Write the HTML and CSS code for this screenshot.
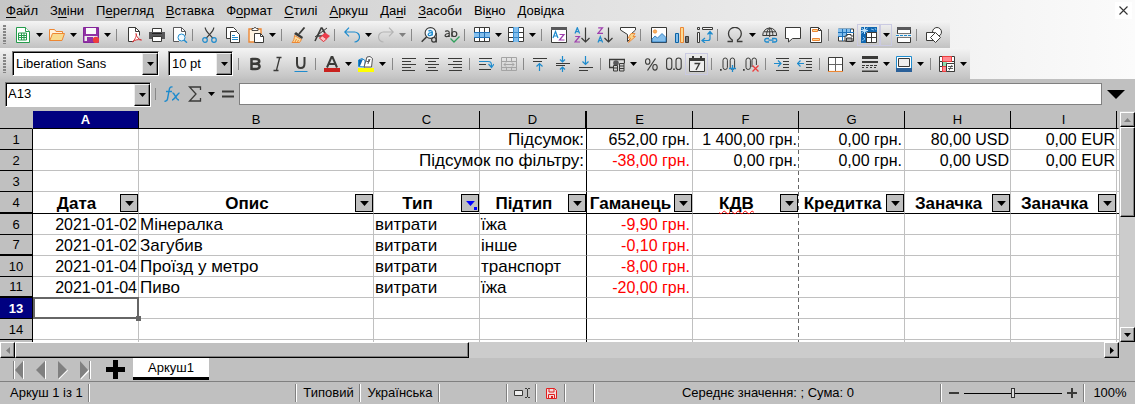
FILE: index.html
```html
<!DOCTYPE html>
<html lang="uk">
<head>
<meta charset="utf-8">
<title>Аркуш1</title>
<link rel="stylesheet" href="styles.css">
</head>
<body>
<svg class="defs" aria-hidden="true"><symbol id="dd" viewBox="0 0 7 4"><path d="M0 0h7L3.5 4z"/></symbol></svg>

<div class="top">
<nav class="menu">
<button><u>Ф</u>айл</button><button>З<u>м</u>іни</button><button>П<u>е</u>регляд</button><button><u>В</u>ставка</button><button>Ф<u>о</u>рмат</button><button><u>С</u>тилі</button><button><u>А</u>ркуш</button><button>Да<u>н</u>і</button><button><u>З</u>асоби</button><button>Ві<u>к</u>но</button><button><u>Д</u>овідка</button>
<button class="close" aria-label="Закрити"><svg viewBox="0 0 9 9" width="9" height="9"><path d="M.5.5l8 8M8.500.5l-8 8" stroke="#333" stroke-width="1.1"/></svg></button>
</nav>

<div class="bar bar-main">
<i class="grip"></i>
<button class="tb" aria-label="Створити"><svg viewBox="0 0 16 16"><path d="M1.500.5h9l4 4v11h-13z" fill="#fff" stroke="#259c4c"/><path d="M10.500.5v4h4" fill="#fff" stroke="#259c4c"/><path d="M3.500 6h8v7h-8zM3.500 8.500h8M3.500 10.500h8M6.500 6v7M9 6v7" fill="none" stroke="#259c4c"/></svg></button><button class="drop" aria-label="Меню"><svg><use href="#dd"/></svg></button>
<button class="tb" aria-label="Відкрити"><svg viewBox="0 0 16 16"><path d="M.5 13.500v-11h5l1.500 2h6.500v3" fill="#fff3df" stroke="#ed8733"/><path d="M3.500 6.500h12l-2.500 7H.8z" fill="#f8db8f" stroke="#ed8733"/></svg></button><button class="drop" aria-label="Меню"><svg><use href="#dd"/></svg></button>
<button class="tb" aria-label="Зберегти"><svg viewBox="0 0 16 16"><path d="M.5.5h15v15H.5z" fill="#9132a5" stroke="#84269a"/><path d="M3 1h10v6H3z" fill="#fafafa"/><path d="M1.500 9h13v5h-13z" fill="#ededed"/><path d="M4 10h6v5H4z" fill="#9132a5"/><circle cx="13" cy="13" r="3.200" fill="#ee3d3d"/></svg></button><button class="drop" aria-label="Меню"><svg><use href="#dd"/></svg></button>
<i class="sep"></i>
<button class="tb" aria-label="PDF"><svg viewBox="0 0 16 16"><path d="M8 14.500H2.500V.5h7l4 4v4" fill="#fff" stroke="#3a3a38"/><path d="M9.500.5v4h4" fill="none" stroke="#3a3a38"/><path d="M10 6.500c1 2-1 6-3.500 8.500 2-2 5-3 9-2-3-.5-5-3-5.500-6.500z" fill="#fff" stroke="#d7373a"/></svg></button>
<button class="tb" aria-label="Друк"><svg viewBox="0 0 16 16"><path d="M3.500 5V1.500h9V5" fill="#fff" stroke="#3a3a38"/><path d="M0 5h16v7H0z" fill="#58585a"/><path d="M3 6h10v1H3z" fill="#222"/><path d="M3.500 9.500h9v5h-9z" fill="#fff" stroke="#3a3a38"/></svg></button>
<button class="tb" aria-label="Перегляд друку"><svg viewBox="0 0 16 16"><path d="M7 14.500H1.500V.5h8l4 4v4" fill="#fff" stroke="#58585a"/><path d="M9.500.5v4h4" fill="none" stroke="#58585a"/><circle cx="9.500" cy="10.500" r="3.500" fill="#eef8ff" stroke="#1e8bcd"/><path d="M12 13l3 2.700" stroke="#1e8bcd" stroke-width="1.400"/></svg></button>
<i class="sep"></i>
<button class="tb" aria-label="Вирізати"><svg viewBox="0 0 16 16"><path d="M3.200.5c0 4 4.800 7 7.800 11M11.800.5c0 4-4.800 7-7.800 11" fill="none" stroke="#3a3a38" stroke-width="1.200"/><circle cx="3" cy="13" r="2.300" fill="none" stroke="#1e8bcd" stroke-width="1.200"/><circle cx="12" cy="13" r="2.300" fill="none" stroke="#1e8bcd" stroke-width="1.200"/></svg></button>
<button class="tb" aria-label="Копіювати"><svg viewBox="0 0 16 16"><path d="M1.500.5h7l3 3v8h-10z" fill="#fff" stroke="#3a3a38"/><path d="M5.500 4.500h6l3 3v8h-9z" fill="#fff" stroke="#3a3a38"/><path d="M7 8.500h3M7 10.500h6M7 12.500h6" stroke="#1e8bcd"/></svg></button>
<button class="tb" aria-label="Вставити"><svg viewBox="0 0 16 16"><path d="M1 2h12v13H1z" fill="#fff4e2" stroke="#ed8733" stroke-width="1.400"/><path d="M4 3.500V1.500h1.500L7 .3l1.500 1.200H10v2z" fill="#fff" stroke="#3a3a38" stroke-width=".9"/><path d="M6.500 6.500h6l3 3v6h-9z" fill="#fff" stroke="#3a3a38"/><path d="M12.500 6.500v3h3" fill="none" stroke="#3a3a38"/></svg></button><button class="drop" aria-label="Меню"><svg><use href="#dd"/></svg></button>
<i class="sep"></i>
<button class="tb" aria-label="Клонувати форматування"><svg viewBox="0 0 16 16"><path d="M13.500.5L8 7" stroke="#3a3a38" stroke-width="1.800"/><path d="M5 5l7 5-1 2-8-5z" fill="#3a3a38"/><path d="M3.500 8.500l7 4-2 3H1c1.500-1.500 2.500-4 2.500-7z" fill="#fbdc9d" stroke="#ed8733"/><path d="M4 15l1.500-3M6.500 15l1-2" stroke="#ed8733"/></svg></button>
<button class="tb" aria-label="Очистити форматування"><svg viewBox="0 0 16 16"><path d="M1 14L7.200 1h.8l4 7M3.500 9h5.500" fill="none" stroke="#3a3a38" stroke-width="1.600"/><path d="M1 10l12-9" stroke="#3a3a38"/><path d="M11 5.500l5 3.500-6.500 6L5 11z" fill="#ee3d4d"/><path d="M8.500 9l4 3-3 2.500L5.500 11z" fill="#ffc1c6" stroke="#d7373a" stroke-width=".8"/></svg></button>
<i class="sep"></i>
<button class="tb" aria-label="Скасувати"><svg viewBox="0 0 16 16"><path d="M1 5h9.500a4.800 4.800 0 0 1 0 10M5 .7L.8 5 5 9.300" fill="none" stroke="#1e8bcd" stroke-width="1.200"/></svg></button><button class="drop" aria-label="Меню"><svg><use href="#dd"/></svg></button>
<button class="tb" aria-label="Повторити"><svg viewBox="0 0 16 16"><path d="M15 5H5.500a4.800 4.800 0 0 0 0 10M11 .7L15.200 5 11 9.300" fill="none" stroke="#b4b4b4" stroke-width="1.200"/></svg></button><button class="drop off" aria-label="Меню"><svg><use href="#dd"/></svg></button>
<i class="sep"></i>
<button class="tb" aria-label="Знайти"><svg viewBox="0 0 16 16"><circle cx="9.500" cy="6" r="5.400" fill="#f6fbff" stroke="#3a3a38" stroke-width="1.100"/><path d="M5.500 10L.7 14.700" stroke="#3a3a38" stroke-width="1.600"/><path d="M7.500 4.200c1-1 3.800-1 3.800.8v3.500M11.200 5.700c-5-.3-4.800 3.200-2.200 2.800 1 0 2-.8 2.200-1.500" fill="none" stroke="#1e8bcd" stroke-width="1.300"/><path d="M15.300 6v9.500" stroke="#3a3a38" stroke-width="1.200"/><circle cx="12.900" cy="12.800" r="2.300" fill="none" stroke="#3a3a38" stroke-width="1.200"/></svg></button>
<button class="tb" aria-label="Правопис"><svg viewBox="0 0 16 16"><path d="M1.200 4.500c1-.9 4-.9 4 1v4.500M5.200 6.500C.5 6.200.2 9.700 2.500 9.700c1.500 0 2.500-1 2.700-1.800" fill="none" stroke="#3a3a38" stroke-width="1.200"/><path d="M8 1v9" stroke="#3a3a38" stroke-width="1.200"/><circle cx="10.300" cy="7" r="2.500" fill="none" stroke="#3a3a38" stroke-width="1.200"/><path d="M6.500 11.500l3.500 3.500 5.500-5.500" fill="none" stroke="#30a05c" stroke-width="1.300"/></svg></button>
<i class="sep"></i>
<button class="tb" aria-label="Рядок"><svg viewBox="0 0 16 16"><path d="M.5.5h15v14H.5z" fill="#fff" stroke="#3a3a38"/><path d="M5.500 0v15M10.500 0v15" stroke="#3a3a38"/><path d="M0 5h16v5H0z" fill="#83beec"/><path d="M0 5.500h16M0 10.500h16M5.500 5v5M10.500 5v5" stroke="#1e70b8"/></svg></button><button class="drop" aria-label="Меню"><svg><use href="#dd"/></svg></button>
<button class="tb" aria-label="Стовпець"><svg viewBox="0 0 16 16"><path d="M.5.5h15v14H.5z" fill="#fff" stroke="#3a3a38"/><path d="M0 5.500h16M0 10.500h16" stroke="#3a3a38"/><path d="M5 0h6v15H5z" fill="#83beec"/><path d="M5.500 0v15M10.500 0v15M5 5.500h6M5 10.500h6" stroke="#3a8fd0"/></svg></button><button class="drop" aria-label="Меню"><svg><use href="#dd"/></svg></button>
<i class="sep"></i>
<button class="tb" aria-label="Сортувати"><svg viewBox="0 0 16 16"><path d="M.5.5h15v15H.5z" fill="#fff" stroke="#3a3a38"/><path d="M0 0h16v3H0z" fill="#58585a"/><path d="M2 11l2.500-6.500L7 11M3 9h3" fill="none" stroke="#1e8bcd" stroke-width="1.200"/><path d="M8.500 7.500H13l-4.500 5.500H13.500" fill="none" stroke="#9f3fae" stroke-width="1.200"/></svg></button>
<button class="tb" aria-label="За зростанням"><svg viewBox="0 0 16 16"><path d="M1 6.500L3.300.7l2.300 5.800M2 4.700h2.800" fill="none" stroke="#1e8bcd" stroke-width="1.200"/><path d="M1.200 9.500h4.300l-4.500 5.500h5" fill="none" stroke="#9f3fae" stroke-width="1.200"/><path d="M11.500.5V15M7.500 11l4 4 4-4" fill="none" stroke="#3a3a38" stroke-width="1.200"/></svg></button>
<button class="tb" aria-label="За спаданням"><svg viewBox="0 0 16 16"><path d="M1.200.8h4.300L1 6.300h5" fill="none" stroke="#9f3fae" stroke-width="1.200"/><path d="M1 15.500l2.300-5.800 2.300 5.800M2 13.700h2.800" fill="none" stroke="#1e8bcd" stroke-width="1.200"/><path d="M11.500.5V15M7.500 11l4 4 4-4" fill="none" stroke="#3a3a38" stroke-width="1.200"/></svg></button>
<button class="tb" aria-label="Автофільтр"><svg viewBox="0 0 16 16"><path d="M.5.5h15v2.500l-5 4.500v4l-3 3v-7L.5 3z" fill="#fff" stroke="#3a3a38"/><path d="M11 6.500h4l-2 3h2.500l-7 6 2-4.500H8z" fill="#f9d58b" stroke="#ed8733" stroke-width=".9"/></svg></button>
<i class="sep sep-wide"></i>
<button class="tb" aria-label="Зображення"><svg viewBox="0 0 16 16"><path d="M.5.5h15v15H.5z" fill="#fff" stroke="#3a3a38"/><circle cx="4" cy="4.500" r="1.700" fill="#f9b45f" stroke="#ed8733" stroke-width=".7"/><path d="M1 15v-3l3-3 2.500 2L11 6.500l4 4V15z" fill="#83beec" stroke="#1e70b8" stroke-width=".8"/></svg></button>
<button class="tb" aria-label="Діаграма"><svg viewBox="0 0 16 16"><path d="M1.500 6.500h3v9h-3z" fill="#83beec" stroke="#0b63a5"/><path d="M6.500.5h3v15h-3z" fill="#fbdb95" stroke="#ed8733"/><path d="M11.500 9.500h3v6h-3z" fill="#787878" stroke="#3a3a38"/></svg></button>
<button class="tb" aria-label="Зведена таблиця"><svg viewBox="0 0 16 16"><path d="M.5.5h2v2h-2zM5.500.5h10v2h-10zM.5 5.500h2v10h-2z" fill="#f4f4f4" stroke="#3a3a38"/><path d="M5 13.500h6c1.500 0 2-1 2-2V5M10.500 7.500L13 4.500l2.500 3M8 11l-3 2.500L8 16" fill="none" stroke="#1e8bcd" stroke-width="1.200"/></svg></button>
<i class="sep"></i>
<button class="tb" aria-label="Спеціальний символ"><svg viewBox="0 0 16 16"><path d="M.5 14.500h4.800V13C2.500 11 1.500 9 1.500 6.500a6.200 6 0 0 1 12.800 0c0 2.500-1 4.500-3.800 6.500v1.500h5" fill="none" stroke="#3a3a38" stroke-width="1.300"/></svg></button><button class="drop drop-wide" aria-label="Меню"><svg><use href="#dd"/></svg></button>
<button class="tb" aria-label="Гіперпосилання"><svg viewBox="0 0 16 16"><path d="M.7 8.500a7 7.500 0 0 1 14 0M.7 8.500h14M7.700 1v9M4.500 9c0-4 1-7 3.200-8 2.200 1 3.200 4 3.200 8M2 4.800h11.500" fill="none" stroke="#3a3a38"/><path d="M7 11.500H4.500a1.700 1.700 0 0 0 0 3.500H7M10 11.500h3a1.700 1.700 0 0 1 0 3.500h-3M6.500 13.200h5" fill="none" stroke="#1e8bcd" stroke-width="1.300"/></svg></button>
<button class="tb" aria-label="Примітка"><svg viewBox="0 0 16 16"><path d="M.5.5h15v11H7.500L3.500 15v-3.500h-3z" fill="#fff" stroke="#3a3a38"/></svg></button>
<button class="tb" aria-label="Колонтитули"><svg viewBox="0 0 16 16"><path d="M2.500.5h8l3 3v12h-11z" fill="#fff" stroke="#3a3a38"/><path d="M4.500 2.500h5v2h-5zM4.500 11.500h7v2h-7z" fill="#fbdb95" stroke="#ed8733"/><path d="M10.500.5v3h3" fill="none" stroke="#3a3a38"/></svg></button>
<i class="sep"></i>
<button class="tb" aria-label="Область друку"><svg viewBox="0 0 16 16"><path d="M.5 2h15v12H.5z" fill="#fff" stroke="#3a3a38"/><path d="M0 1.500h13v4H0zM0 5.500h9v4H0z" fill="#83beec"/><path d="M0 5.500h16M0 9.500h9M4.500 2v12M8.500 2v12M12.500 2v4" stroke="#1e70b8"/><path d="M9 7.500h4V9h2.500v5H7V9h2z" fill="#fff" stroke="#3a3a38"/><path d="M8.500 11h5.500v3.500H8.500z" fill="#aaa" stroke="#333"/></svg></button>
<button class="tb on" aria-label="Закріпити" aria-pressed="true"><svg viewBox="0 0 16 16"><path d="M.5.5h15v15H.5z" fill="#fff" stroke="#3a3a38"/><path d="M0 0h16v5H5v11H0z" fill="#0f66b0"/><path d="M5.500 5v10M10.500 5v10M5 10.500h11M5 5.500h11" stroke="#3a3a38"/><path d="M10 2l3 1M14 1l1 2M2 10l2 2M1 14l3-2" stroke="#83beec"/><path d="M3.500 0v7M.5 1l6 5M6.500 1l-6 5M0 3.500h7" stroke="#bfe2fb" stroke-width="1"/></svg></button><button class="drop drop-wide on" aria-label="Меню"><svg><use href="#dd"/></svg></button>
<button class="tb" aria-label="Розділити"><svg viewBox="0 0 16 16"><path d="M1.500.5h13v15h-13z" fill="#fff" stroke="#3a3a38"/><path d="M1 0h14v3H1z" fill="#58585a"/><path d="M0 7h16v3H0z" fill="#eee"/><path d="M0 8.500h16" stroke="#1e8bcd" stroke-dasharray="3 1"/><path d="M1.500 6.500h13M1.500 10.500h13" stroke="#777"/></svg></button>
<i class="sep"></i>
<button class="tb" aria-label="Фігури"><svg viewBox="0 0 16 16"><circle cx="11" cy="5" r="4.500" fill="#fff" stroke="#3a3a38"/><path d="M.5 5.500h8v8h-8z" fill="#fff" stroke="#3a3a38"/><path d="M9.500 5.500l5 5-5 5-5-5z" fill="#fff" stroke="#3a3a38"/></svg></button>
</div>

<div class="bar bar-format">
<i class="grip"></i>
<div class="combo font"><select aria-label="Шрифт"><option>Liberation Sans</option></select><span class="cbtn"><svg><use href="#dd"/></svg></span></div>
<div class="combo size"><select aria-label="Розмір"><option>10 pt</option></select><span class="cbtn"><svg><use href="#dd"/></svg></span></div>
<i class="sep"></i>
<button class="tb" aria-label="Жирний"><svg viewBox="0 0 16 16"><path d="M4.500 2v12M4.500 3h4c5 0 5 4.700 0 4.700H5M8 7.700c6 0 6 5.300.5 5.300h-4" fill="none" stroke="#3a3a38" stroke-width="2.500"/></svg></button>
<button class="tb" aria-label="Курсив"><svg viewBox="0 0 16 16"><path d="M6.500 1.500h5M3.500 14.500h5M9.700 1.500l-3.300 13" stroke="#3a3a38" stroke-width="1.300"/></svg></button>
<button class="tb" aria-label="Підкреслений"><svg viewBox="0 0 16 16"><path d="M4 1v6.500c0 6 7.500 6 7.500 0V1" fill="none" stroke="#3a3a38" stroke-width="2"/><path d="M1.500 15.500h13" stroke="#1e8bcd"/></svg></button>
<i class="sep"></i>
<button class="tb" aria-label="Колір шрифту"><svg viewBox="0 0 16 16"><path d="M3 11.500L7.500 1h1L13 11.500M5 8h6" fill="none" stroke="#3a3a38" stroke-width="2"/><path d="M0 12h16v4H0z" fill="#c9211e"/></svg></button><button class="drop" aria-label="Меню"><svg><use href="#dd"/></svg></button>
<button class="tb" aria-label="Підсвічування"><svg viewBox="0 0 16 16"><path d="M.5 10.500V4L4 2.500l3 2V11z" fill="#fff" stroke="#1e8bcd"/><path d="M1 10V4l4-1-3 7z" fill="#0f66b0"/><path d="M6 11l3-10 3-.5 2.500 2-1 8.500z" fill="#fff" stroke="#58585a"/><path d="M8 5l3 1 1-3M10 8l1-5" fill="none" stroke="#58585a"/><path d="M0 12h16v4H0z" fill="#ff0"/></svg></button><button class="drop" aria-label="Меню"><svg><use href="#dd"/></svg></button>
<i class="sep"></i>
<button class="tb" aria-label="Ліворуч"><svg viewBox="0 0 16 16"><path d="M1 2.500h14M1 5.500h9M1 8.500h14M1 11.500h9M1 14.500h13" stroke="#3a3a38" stroke-width="1.200"/></svg></button>
<button class="tb" aria-label="По центру"><svg viewBox="0 0 16 16"><path d="M1 2.500h14M4 5.500h8M1 8.500h14M4 11.500h8M2 14.500h12" stroke="#3a3a38" stroke-width="1.200"/></svg></button>
<button class="tb" aria-label="Праворуч"><svg viewBox="0 0 16 16"><path d="M1 2.500h14M6 5.500h9M1 8.500h14M6 11.500h9M2 14.500h13" stroke="#3a3a38" stroke-width="1.200"/></svg></button>
<i class="sep"></i>
<button class="tb" aria-label="Перенесення"><svg viewBox="0 0 16 16"><path d="M1 2.500h13M1 8.500h7M1 13.500h12" stroke="#3a3a38" stroke-width="1.200"/><path d="M1 5.500h9c3 0 3.500 1 3.500 5M10.500 8l3 3.500 2.500-3.500" fill="none" stroke="#1e8bcd" stroke-width="1.200"/></svg></button>
<button class="tb" aria-label="Об'єднати"><svg viewBox="0 0 16 16"><path d="M.5 1.500h15v13H.5zM.5 5.500h15M.5 11.500h15M5.500 1.500v4M10.500 1.500v4M5.500 11.500v3M10.500 11.500v3M3 8.500h10M5 6.500l-2 2 2 2M11 6.500l2 2-2 2" fill="none" stroke="#a4a4a4"/></svg></button>
<i class="sep"></i>
<button class="tb" aria-label="Догори"><svg viewBox="0 0 16 16"><path d="M1 2.500h14M1 5.500h9" stroke="#3a3a38" stroke-width="1.200"/><path d="M7.500 15V7.500M4.500 10.500l3-3 3 3" fill="none" stroke="#1e8bcd" stroke-width="1.200"/></svg></button>
<button class="tb" aria-label="Посередині"><svg viewBox="0 0 16 16"><path d="M1 7.500h14M1 9.500h9" stroke="#3a3a38" stroke-width="1.100"/><path d="M7.500 0v6M5 3.500L7.500 6 10 3.500M7.500 16v-5M5 13.500L7.500 11l2.500 2.500" fill="none" stroke="#1e8bcd" stroke-width="1.200"/></svg></button>
<button class="tb" aria-label="Донизу"><svg viewBox="0 0 16 16"><path d="M1 11.500h14M1 14.500h9" stroke="#3a3a38" stroke-width="1.200"/><path d="M7.500 0v8M4.500 5.500l3 3 3-3" fill="none" stroke="#1e8bcd" stroke-width="1.200"/></svg></button>
<i class="sep"></i>
<button class="tb" aria-label="Валюта"><svg viewBox="0 0 16 16"><path d="M7.500 11.500H.5v-8h15v4" fill="none" stroke="#3a3a38" stroke-width="1.300"/><circle cx="7" cy="7" r="2.800" fill="#58585a"/><path d="M4.500 9.500h4v5.500h-4zM10.500 7.500h4.500v7.500h-4.500z" fill="#ccc" stroke="#3a3a38"/><path d="M4.500 12h4M10.500 10h4.500M10.500 12.500h4.500" stroke="#3a3a38"/></svg></button><button class="drop" aria-label="Меню"><svg><use href="#dd"/></svg></button>
<button class="tb" aria-label="Відсоток"><svg viewBox="0 0 16 16"><path d="M12.500 2.500l-8 12" stroke="#3a3a38" stroke-width="1.200"/><ellipse cx="4.700" cy="5.500" rx="2.200" ry="2.800" fill="none" stroke="#3a3a38" stroke-width="1.100"/><ellipse cx="12" cy="11.300" rx="2.200" ry="2.800" fill="none" stroke="#3a3a38" stroke-width="1.100"/></svg></button>
<button class="tb" aria-label="Число"><svg viewBox="0 0 16 16"><rect x=".6" y="2" width="5.200" height="11.500" rx="2.600" fill="none" stroke="#3a3a38" stroke-width="1.100"/><rect x="10" y="2" width="5.200" height="11.500" rx="2.600" fill="none" stroke="#3a3a38" stroke-width="1.100"/><path d="M7.200 12.500h1.600v1.600H7.200z" fill="#3a3a38"/></svg></button>
<button class="tb on" aria-label="Дата" aria-pressed="true"><svg viewBox="0 0 16 16"><path d="M.5 2.500h15v13H.5z" fill="#eee" stroke="#3a3a38"/><path d="M0 2h16v3H0zM3 0h2v3H3zM11 0h2v3h-2z" fill="#3a3a38"/><path d="M5.500 7.500h5L7 14" fill="none" stroke="#3a3a38" stroke-width="1.400"/></svg></button>
<i class="sep"></i>
<button class="tb" aria-label="Додати знак"><svg viewBox="0 0 16 16"><path d="M0 13h1.700v1.700H0z" fill="#3a3a38"/><rect x="3" y="2" width="4.400" height="11.500" rx="2.200" fill="none" stroke="#3a3a38"/><rect x="10.200" y="2" width="4.400" height="11.500" rx="2.200" fill="none" stroke="#3a3a38"/><path d="M9 12.500h7M12.500 9v7" stroke="#1e8bcd" stroke-width="1.300"/></svg></button>
<button class="tb" aria-label="Вилучити знак"><svg viewBox="0 0 16 16"><path d="M0 13h1.700v1.700H0z" fill="#3a3a38"/><path d="M9 11V4.200a2.200 2.200 0 0 1 4.400 0V9" fill="none" stroke="#3a3a38"/><rect x="3" y="2" width="4.400" height="11.500" rx="2.200" fill="none" stroke="#3a3a38"/><path d="M9.500 9.500l6 6M15.500 9.500l-6 6" stroke="#ee3d3d" stroke-width="1.300"/></svg></button>
<i class="sep"></i>
<button class="tb" aria-label="Збільшити відступ"><svg viewBox="0 0 16 16"><path d="M2 2.500h13M9 5.500h6M9 8.500h6M9 11.500h6M2 14.500h13" stroke="#3a3a38" stroke-width="1.200"/><path d="M0 7.500h7M4 4.500l3 3-3 3" fill="none" stroke="#1e8bcd" stroke-width="1.200"/></svg></button>
<button class="tb" aria-label="Зменшити відступ"><svg viewBox="0 0 16 16"><path d="M2 2.500h13M9 5.500h6M9 8.500h6M9 11.500h6M2 14.500h13" stroke="#3a3a38" stroke-width="1.200"/><path d="M7 7.500H0M3.500 4.500l-3 3 3 3" fill="none" stroke="#1e8bcd" stroke-width="1.200"/></svg></button>
<i class="sep"></i>
<button class="tb" aria-label="Обрамлення"><svg viewBox="0 0 16 16"><path d="M.5 1.500h14v14H.5z" fill="#fff" stroke="#3a3a38"/><path d="M7.500 2v13M1 8.500h13" stroke="#666"/><path d="M0 15.500h15" stroke="#ed8733" stroke-width="1.200"/></svg></button><button class="drop" aria-label="Меню"><svg><use href="#dd"/></svg></button>
<button class="tb" aria-label="Стиль ліній"><svg viewBox="0 0 16 16"><path d="M0 0h16v3H0zM0 5h16v2H0zM0 14.500h16v1.500H0z" fill="#3a3a38"/><path d="M0 9.500h16" stroke="#3a3a38" stroke-dasharray="3 1"/><path d="M0 11.500h16" stroke="#3a3a38" stroke-dasharray="2 2"/></svg></button><button class="drop" aria-label="Меню"><svg><use href="#dd"/></svg></button>
<button class="tb" aria-label="Колір обрамлення"><svg viewBox="0 0 16 16"><path d="M.5.5h15v12H.5z" fill="#fff" stroke="#1e8bcd"/><path d="M2.500 2.500h11v8h-11z" fill="#eee" stroke="#3a3a38"/><path d="M0 12h16v4H0z" fill="#2a6099"/></svg></button><button class="drop" aria-label="Меню"><svg><use href="#dd"/></svg></button>
<i class="sep"></i>
<button class="tb" aria-label="Умовне форматування"><svg viewBox="0 0 16 16"><path d="M.5.5h15v15H.5z" fill="#fff" stroke="#3a3a38"/><path d="M0 5.500h15M0 10.500h7M3.500 0v16M12.500 0v6" stroke="#3a3a38"/><path d="M3.500.5h9v5h-9zM3.500 10.500h4v5h-4z" fill="#ff8a92" stroke="#ee3d3d"/><path d="M4 6h4v4H4z" fill="#8fdcae"/><path d="M7.500 7.500h8v8h-8z" fill="#fff" stroke="#3a3a38"/><path d="M9 10.500h5M9 12.500h5M13 9l-3 5.500" stroke="#3a3a38" stroke-width=".8"/></svg></button><button class="drop" aria-label="Меню"><svg><use href="#dd"/></svg></button>
</div>
</div>

<div class="formula">
<div class="combo name"><input aria-label="Комірка" value="A13"><button class="cbtn" aria-label="Список"><svg><use href="#dd"/></svg></button></div>
<i class="sep"></i>
<button class="fx" aria-label="Майстер функцій"><svg viewBox="0 0 16 16" width="16" height="16"><path d="M8.500 1C6 .5 5.500 2 5 5L3.500 13c-.4 2-1.500 2.500-3 2.200M2 5.500h6" fill="none" stroke="#1e8bcd" stroke-width="1.400"/><path d="M8.500 7c2.500-.5 3 7 6.500 7M15.500 7c-2 0-5 7-7.500 7" fill="none" stroke="#1e8bcd" stroke-width="1.500"/></svg></button>
<button class="sum" aria-label="Сума"><svg viewBox="0 0 14 16" width="14" height="16"><path d="M12.500 4V1H1.500L8 8l-6.500 7h11v-3" fill="none" stroke="#3a3a38" stroke-width="1.300"/></svg></button><button class="drop" aria-label="Меню"><svg><use href="#dd"/></svg></button>
<button class="eq" aria-label="Формула"><svg viewBox="0 0 14 8" width="14" height="8"><path d="M1 1.500h12M1 6.500h12" stroke="#3a3a38" stroke-width="2"/></svg></button>
<input class="line" aria-label="Рядок формул">
<button class="expand" aria-label="Розгорнути"><svg viewBox="0 0 18 9" width="18" height="9"><path d="M0 0h18L9 9z"/></svg></button>
</div>

<main class="sheet">
<div class="grid">
<table>
<colgroup><col class="c-head"><col class="c-std"><col class="c-desc"><col class="c-std"><col class="c-split"><col class="c-std"><col class="c-std"><col class="c-std"><col class="c-std"><col class="c-std"><col></colgroup>
<thead><tr><th></th><th class="sel">A</th><th>B</th><th>C</th><th class="split">D</th><th>E</th><th>F</th><th>G</th><th>H</th><th>I</th><th></th></tr></thead>
<tbody>
<tr><th>1</th><td></td><td></td><td></td><td class="r split">Підсумок:</td><td class="r">652,00 грн.</td><td class="r page">1 400,00 грн.</td><td class="r">0,00 грн.</td><td class="r cur">80,00 USD</td><td class="r cur">0,00 EUR</td><td></td></tr>
<tr><th>2</th><td></td><td></td><td></td><td class="r split"><span class="spill">Підсумок по фільтру:</span></td><td class="r neg">-38,00 грн.</td><td class="r page">0,00 грн.</td><td class="r">0,00 грн.</td><td class="r cur">0,00 USD</td><td class="r cur">0,00 EUR</td><td></td></tr>
<tr><th>3</th><td></td><td></td><td></td><td class="split"></td><td></td><td class="page"></td><td></td><td></td><td></td><td></td></tr>
<tr class="titles"><th>4</th>
<td><div class="hd"><b>Дата</b><button aria-label="Фільтр"><svg><use href="#dd"/></svg></button></div></td>
<td><div class="hd"><b>Опис</b><button aria-label="Фільтр"><svg><use href="#dd"/></svg></button></div></td>
<td><div class="hd"><b>Тип</b><button class="active" aria-label="Фільтр"><svg><use href="#dd"/></svg></button></div></td>
<td class="split"><div class="hd"><b>Підтип</b><button aria-label="Фільтр"><svg><use href="#dd"/></svg></button></div></td>
<td><div class="hd"><b>Гаманець</b><button aria-label="Фільтр"><svg><use href="#dd"/></svg></button></div></td>
<td class="page"><div class="hd"><b><span class="typo">КДВ</span></b><button aria-label="Фільтр"><svg><use href="#dd"/></svg></button></div></td>
<td><div class="hd"><b>Кредитка</b><button aria-label="Фільтр"><svg><use href="#dd"/></svg></button></div></td>
<td><div class="hd"><b>Заначка</b><button aria-label="Фільтр"><svg><use href="#dd"/></svg></button></div></td>
<td><div class="hd"><b>Заначка</b><button aria-label="Фільтр"><svg><use href="#dd"/></svg></button></div></td><td></td></tr>
<tr><th>6</th><td class="r date">2021-01-02</td><td>Мінералка</td><td>витрати</td><td class="split">їжа</td><td class="r neg">-9,90 грн.</td><td class="page"></td><td></td><td></td><td></td><td></td></tr>
<tr class="gap"><th>7</th><td class="r date">2021-01-02</td><td>Загубив</td><td>витрати</td><td class="split">інше</td><td class="r neg">-0,10 грн.</td><td class="page"></td><td></td><td></td><td></td><td></td></tr>
<tr><th>10</th><td class="r date">2021-01-04</td><td>Проїзд у метро</td><td>витрати</td><td class="split">транспорт</td><td class="r neg">-8,00 грн.</td><td class="page"></td><td></td><td></td><td></td><td></td></tr>
<tr class="gap"><th>11</th><td class="r date">2021-01-04</td><td>Пиво</td><td>витрати</td><td class="split">їжа</td><td class="r neg">-20,00 грн.</td><td class="page"></td><td></td><td></td><td></td><td></td></tr>
<tr><th class="sel">13</th><td class="cursor"></td><td></td><td></td><td class="split"></td><td></td><td class="page"></td><td></td><td></td><td></td><td></td></tr>
<tr><th>14</th><td></td><td></td><td></td><td class="split"></td><td></td><td class="page"></td><td></td><td></td><td></td><td></td></tr>
<tr><th></th><td></td><td></td><td></td><td class="split"></td><td></td><td class="page"></td><td></td><td></td><td></td><td></td></tr>
</tbody>
</table>
</div>
<div class="vscroll">
<button class="raised" aria-label="Вгору"><svg viewBox="0 0 7 4" width="7" height="4"><path d="M0 4h7L3.500 0z" fill="#808080"/></svg></button>
<div class="raised thumb"></div><div class="rest"></div>
<button class="raised" aria-label="Вниз"><svg viewBox="0 0 7 4" width="7" height="4"><path d="M0 0h7L3.500 4z"/></svg></button>
</div>
<div class="hscroll">
<button class="raised" aria-label="Ліворуч"><svg viewBox="0 0 4 7" width="4" height="7"><path d="M4 0v7L0 3.500z" fill="#808080"/></svg></button>
<div class="raised thumb"></div><div class="rest"></div>
<button class="raised" aria-label="Праворуч"><svg viewBox="0 0 4 7" width="4" height="7"><path d="M0 0v7l4-3.500z"/></svg></button>
</div>
</main>

<div class="tabs">
<button aria-label="Перший"><svg viewBox="0 0 12 20" width="12" height="20"><path d="M10.500 1v18" stroke="#fff"/><path d="M.5 1v18" stroke="#808080"/><path d="M1.500 1v18" stroke="#fff"/><path d="M10 1v18L2 10z" fill="#808080"/></svg></button>
<button aria-label="Попередній"><svg viewBox="0 0 12 20" width="12" height="20"><path d="M10.500 1v18" stroke="#fff"/><path d="M10 1v18L1 10z" fill="#808080"/></svg></button>
<button aria-label="Наступний"><svg viewBox="0 0 12 20" width="12" height="20"><path d="M1.500 19l9-9" stroke="#fff" stroke-width="1.500"/><path d="M1 1v18l9-9z" fill="#808080"/></svg></button>
<button aria-label="Останній"><svg viewBox="0 0 12 20" width="12" height="20"><path d="M1.500 19l9-9" stroke="#fff" stroke-width="1.500"/><path d="M1 1v18l8-9z" fill="#808080"/><path d="M10.500 1v18" stroke="#808080"/><path d="M11.500 1v18" stroke="#fff"/></svg></button>
<button class="add" aria-label="Додати аркуш"><svg viewBox="0 0 19 19" width="19" height="19"><path d="M7 0h5v7h7v5h-7v7H7v-7H0V7h7z"/></svg></button>
<button class="tab">Аркуш1</button>
</div>

<footer class="status">
<span class="s-pages">Аркуш 1 із 1</span><span></span><span class="mid">Типовий</span><span class="mid">Українська</span><span></span>
<span class="mid"><svg viewBox="0 0 16 10" width="16" height="10"><path d="M.5 2.500h8v5h-8z" fill="#eee" stroke="#3a3a38"/><path d="M13.500 1v8M11 .5h2M14 .5h2M11 9.500h2M14 9.500h2" stroke="#3a3a38"/></svg></span>
<span class="mid"><svg viewBox="0 0 11 11" width="11" height="11"><path d="M.5.5h8l2 2v8H.5z" fill="#f5dcdc" stroke="#e02020"/><path d="M3 .5v3.500h5V.5M2.500 10V6.500h6V10" fill="none" stroke="#e02020"/><path d="M5 8h2v2H5z" fill="#e02020"/></svg></span>
<span></span><span class="mid">Середнє значення: ; Сума: 0</span>
<span class="zoom"><button aria-label="Зменшити"><svg viewBox="0 0 10 10" width="10" height="10"><path d="M0 5h10" stroke="#3a3a38" stroke-width="2"/></svg></button><input type="range" min="0" max="100" value="50" aria-label="Масштаб"><button aria-label="Збільшити"><svg viewBox="0 0 10 10" width="10" height="10"><path d="M0 5h10M5 0v10" stroke="#3a3a38" stroke-width="2"/></svg></button></span>
<span class="mid">100%</span>
</footer>
</body>
</html>
```
FILE: styles.css
```css
* { box-sizing: border-box; }
body {
  margin: 0;
  height: 100vh;
  display: flex;
  flex-direction: column;
  overflow: hidden;
  background: #c0c0c0;
  color: #000;
  font: 13px/16px "Liberation Sans", Arial, sans-serif;
}
button, input, select { font: inherit; color: inherit; margin: 0; border-radius: 0; }
button { padding: 0; border: 0; background: none; display: flex; align-items: center; justify-content: center; }
svg { display: block; flex: none; }
.defs { position: absolute; width: 0; height: 0; }

.top { background: linear-gradient(90deg, #c6c6c6, #fbfbfb); }
.menu { display: flex; align-items: center; gap: 12px; height: 21px; padding: 0 3px 0 6px; }
.menu u { text-underline-offset: 2px; }
.close { margin-left: auto; width: 17px; height: 17px; background: #fff; }

.bar { display: flex; align-items: center; width: max-content; background: linear-gradient(#f4f4f4, #c2c2c2); }
.bar-main { height: 27px; padding-right: 5px; }
.bar-format { height: 31px; padding-right: 1px; }
.grip { width: 3px; height: 19px; margin: 0 5px 0 3px; background: repeating-linear-gradient(#858585 0 2px, transparent 2px 3px); }
.bar-format .grip { margin-right: 6px; }
.tb { width: 23px; height: 22px; padding: 0 3px 0 4px; }
.tb svg { width: 16px; height: 16px; }
.drop { width: 11px; height: 22px; }
.drop svg, .cbtn svg { width: 7px; height: 4px; }
.drop-wide { width: 12px; }
.off { fill: #808080; }
.on { outline: 1px solid #cacae2; outline-offset: -1px; }
.sep { width: 1px; height: 12px; margin: 0 5px 0 1px; background: #888; }
.sep-wide { margin-right: 6px; }
.drop + .sep { margin-left: 3px; }
.bar-format .sep { margin-left: 3px; margin-right: 4px; }
.bar-format .drop + .sep { margin-left: 4px; }

.combo { position: relative; display: flex; height: 25px; background: #fff; border: 1px solid; border-color: #777 #fff #fff #777; box-shadow: inset 1px 1px #000; }
.combo select, .combo input { flex: 1; min-width: 0; appearance: none; border: 0; background: none; padding: 0 3px; outline: 0; }
.combo input { padding: 0 2px; }
.combo.font { width: 147px; }
.combo.size { width: 65px; margin: 0 2px 0 9px; }
.combo.name { width: 146px; }
.cbtn { position: absolute; top: 1px; right: 0; bottom: 0; width: 16px; display: flex; align-items: center; justify-content: center; pointer-events: none; background: #c0c0c0; border: 1px solid; border-color: #eee #000 #000 #eee; box-shadow: inset -1px -1px #808080; }

.formula { display: flex; align-items: center; height: 32px; padding: 0 10px 2px 5px; }
.formula > .sep { margin: 0 8px 0 4px; }
.sum { margin-left: 8px; }
.formula .drop { width: 15px; margin: 0 2px; }
.line { flex: 1; height: 22px; margin: 0 5px 0 4px; border: 1px solid #808080; background: #fff; padding: 0 3px; outline: 0; }

.sheet { flex: 1; min-height: 0; display: grid; grid-template: minmax(0, 1fr) 16px / minmax(0, 1fr) 16px; }
.grid { overflow: hidden; background: #fff; }
table { width: 100%; table-layout: fixed; border-collapse: separate; border-spacing: 0; font-size: 17px; line-height: 19px; }
.c-head { width: 33px; }
.c-std { width: 106px; }
.c-split { width: 107px; }
.c-desc { width: 235px; }
th { height: 21px; padding: 0; background: #c0c0c0; border-right: 1px solid #000; border-bottom: 1px solid #000; font-size: 13px; font-weight: 400; line-height: 17px; }
thead th { height: 18px; }
thead th:first-child, thead th:last-child { border-right-color: #c0c0c0; }
th.sel { background: #000080; color: #fff; font-weight: 700; }
td { height: 21px; padding: 1px 2px 0 1px; border-right: 1px solid #c0c0c0; border-bottom: 1px solid #c0c0c0; white-space: nowrap; }
td:last-child { border-right: 0; padding: 0; }
td.r { text-align: right; padding: 1px 2px 0 0; font-size: 16px; }
td.date, td.cur { padding-right: 1px; }
td.split { border-right-color: #000; font-size: 17px; }
thead .split { border-right-width: 2px; }
td.page { border-right: 0; background: repeating-linear-gradient(#666 0 4px, transparent 4px 7px) right / 1px 100% no-repeat; padding-right: 2px; }
.neg { color: #f00; }
.spill { float: right; }
.titles td { height: 22px; padding: 0; border-bottom-color: #000; }
.titles th, .gap th { border-bottom-width: 2px; }
.hd { display: flex; align-items: center; height: 21px; padding-top: 1px; }
.titles .page .hd { padding-right: 1px; }
.hd b { flex: 1; text-align: center; }
.hd button { position: relative; width: 18px; height: 18px; background: #c0c0c0; border: 1px solid #000; }
.hd button svg { width: 9px; height: 5px; }
.hd .active { fill: #00f; }
.hd .active::after { content: ""; position: absolute; right: 1px; bottom: 1px; width: 3px; height: 3px; background: #00f; }
.typo { text-decoration: underline wavy #f00 1px; text-underline-offset: 1px; text-decoration-skip-ink: none; }
.cursor { position: relative; }
.cursor::before { content: ""; position: absolute; inset: -1px -1px -1px 0; border: 2px solid #666; }
.cursor::after { content: ""; position: absolute; right: -3px; bottom: -3px; width: 5px; height: 5px; background: #666; }

.raised { background: #c0c0c0; border: 1px solid; border-color: #fff #000 #000 #fff; box-shadow: inset -1px -1px #808080; }
.vscroll, .hscroll { display: flex; background: #ccc; }
.vscroll { flex-direction: column; padding-top: 1px; border-left: 1px solid #c0c0c0; }
.vscroll .raised { height: 15px; }
.vscroll .thumb { flex: 88 1 0; height: auto; }
.vscroll .rest { flex: 111 1 0; }
.hscroll .raised { width: 15px; }
.hscroll .thumb { flex: 452 1 0; width: auto; }
.hscroll .rest { flex: 636 1 0; }

.tabs { display: flex; align-items: center; height: 24px; padding-left: 13px; border-bottom: 1px solid #808080; }
.tabs button { margin-right: 10px; }
.tabs .add { margin: 0 8px 0 5px; }
.tabs .tab { align-self: flex-start; height: 22px; margin: 0; padding: 0 15px; background: #fff; border-bottom: 3px solid #000; }

.status { display: grid; grid-template-columns: 90px minmax(0, 207fr) 64px 79px 68px 29px 29px 29px minmax(0, 347fr) 143px 50px; align-items: center; height: 22px; }
.status > span { display: flex; align-items: center; height: 18px; border-right: 1px solid #fff; box-shadow: inset -1px 0 #808080; white-space: nowrap; }
.status > span:last-child { border: 0; box-shadow: none; }
.status .s-pages { padding-left: 10px; }
.status .mid { justify-content: center; }
.status .zoom { justify-content: center; gap: 5px; }
.zoom input { appearance: none; width: 98px; height: 12px; background: linear-gradient(#000, #000) center / 100% 1px no-repeat; outline: 0; }
.zoom input::-webkit-slider-thumb { appearance: none; width: 4px; height: 10px; background: #ddd; border: 1px solid #333; }
```
